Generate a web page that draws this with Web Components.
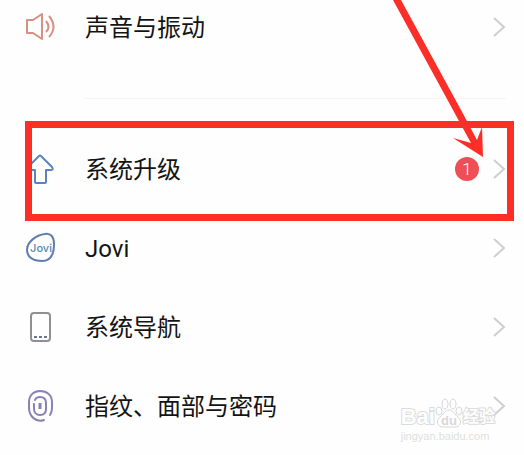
<!DOCTYPE html>
<html lang="zh-CN">
<head>
<meta charset="utf-8">
<meta name="viewport" content="width=device-width, initial-scale=1">
<title>设置</title>
<style>
   body {
      margin: 0;
      background-color: #fefefe;
      color: #141414;
      font-family: Roboto, "Noto Sans CJK SC", sans-serif;
   }
</style>
</head>
<body>
<settings-page></settings-page>

<script>
const icons = {
   sound: `
      <g stroke="#d98f82" stroke-width="2">
         <path d="M3 9H9L18 3V28L9 22H3Z"/>
         <path d="M22 10Q27 16 22 21M25 5Q34 16 25 26"/>
      </g>`,
   upgrade: `
      <path d="M15 3Q16 2 17 3L28 14Q30 17 27 17H22V29Q22 30 21 30H12Q11 30 11 29V17H5Q1 17 4 14Z" stroke="#5b83c0" stroke-width="2"/>`,
   jovi: `
      <path d="M21 2C27 1 30 5 30 12C30 23 26 29 18 29C9 29 3 25 3 18C3 10 12 3 21 2Z" stroke="#5f7eae" stroke-width="2"/>
      <text x="17" y="20" text-anchor="middle" font-family="Inter, sans-serif" font-size="11" font-weight="500" fill="#4f8ab5">Jovi</text>`,
   navigation: `
      <rect x="7" y="2" width="19" height="28" rx="3" stroke="#8f9094" stroke-width="2"/>
      <path d="M10 26H13M15 26H18M20 26H23" stroke="#6d7786" stroke-width="2"/>`,
   fingerprint: `
      <g stroke="#8a82b5" stroke-width="2" stroke-linecap="round">
         <path d="M20 30C12 33 5 26 5 18V12C5 5 10 1 16 1C23 1 28 5 28 12V18Q28 22 26 25"/>
         <path d="M11 10C12 7 14 7 16 7C20 7 22 9 22 13V19C22 23 20 25 16 25C12 25 10 22 10 19V14"/>
         <path d="M16 13V19" stroke-width="3" stroke-linecap="butt"/>
      </g>`
};

class SettingIcon extends HTMLElement {
   constructor() {
      super();
      this.shadowDOM = this.attachShadow({ mode: 'open' });
   }

   connectedCallback() {
      this.shadowDOM.innerHTML = `
         <style>
            :host {
               display: block;
               flex: none;
               width: 32px;
               height: 32px;
            }
            svg {
               display: block;
               overflow: visible;
            }
         </style>
         <svg width="32" height="32" viewBox="0 0 32 32" fill="none" stroke-linejoin="round" aria-hidden="true">
            ${icons[this.getAttribute('name')]}
         </svg>
      `;
   }
}

customElements.define('setting-icon', SettingIcon);

class CountBadge extends HTMLElement {
   constructor() {
      super();
      this.shadowDOM = this.attachShadow({ mode: 'open' });
   }

   connectedCallback() {
      this.shadowDOM.innerHTML = `
         <style>
            :host {
               display: block;
               min-width: 24px;
               border-radius: 12px;
               background-color: #ee4e55;
               color: #fff;
               font-size: 17px;
               font-weight: 300;
               line-height: 24px;
               text-align: center;
            }
         </style>
         <slot></slot>
      `;
   }
}

customElements.define('count-badge', CountBadge);

class SettingRow extends HTMLElement {
   constructor() {
      super();
      this.shadowDOM = this.attachShadow({ mode: 'open' });
   }

   connectedCallback() {
      this.shadowDOM.innerHTML = `
         <style>
            :host {
               display: block;
            }
            a {
               display: flex;
               align-items: center;
               box-sizing: border-box;
               min-height: var(--row-height, 79px);
               padding: 0 18px 0 24px;
               color: inherit;
               text-decoration: none;
            }
            .label {
               flex: 1;
               margin-left: 29px;
               padding-top: 2px;
               font-size: 24px;
               line-height: 32px;
            }
            .arrow {
               flex: none;
               margin-left: 13px;
            }
         </style>
         <a href="#${this.getAttribute('icon')}">
            <setting-icon name="${this.getAttribute('icon')}"></setting-icon>
            <span class="label"><slot></slot></span>
            <slot name="badge"></slot>
            <svg class="arrow" width="14" height="22" viewBox="0 0 14 22" fill="none" stroke="#cfcfcf" stroke-width="2" aria-hidden="true">
               <path d="M2 2L12 11L2 20"/>
            </svg>
         </a>
      `;
   }
}

customElements.define('setting-row', SettingRow);

// red frame and arrow drawn over whatever is slotted in
class MarkedArea extends HTMLElement {
   constructor() {
      super();
      this.shadowDOM = this.attachShadow({ mode: 'open' });
   }

   connectedCallback() {
      this.shadowDOM.innerHTML = `
         <style>
            :host {
               display: block;
               position: relative;
            }
            .frame {
               position: absolute;
               top: -8px;
               right: 10px;
               bottom: -13px;
               left: 25px;
               border: 7px solid #fb2f27;
               pointer-events: none;
            }
            .pointer {
               position: absolute;
               right: 40px;
               bottom: 50px;
               pointer-events: none;
            }
         </style>
         <slot></slot>
         <div class="frame"></div>
         <svg class="pointer" width="94" height="158" viewBox="0 0 94 158" fill="#fb2f27" aria-hidden="true">
            <path d="M3 0H11L71 110L87 140L92 127L93 157L63 138L81 143L63 110Z"/>
         </svg>
      `;
   }
}

customElements.define('marked-area', MarkedArea);

class SiteWatermark extends HTMLElement {
   constructor() {
      super();
      this.shadowDOM = this.attachShadow({ mode: 'open' });
   }

   connectedCallback() {
      this.shadowDOM.innerHTML = `
         <style>
            :host {
               display: block;
               color: #fefefe;
               font-family: "Liberation Sans", "Noto Sans CJK SC", sans-serif;
               font-weight: 700;
               pointer-events: none;
            }
            .brand {
               display: flex;
               align-items: flex-end;
               font-size: 22px;
               line-height: 24px;
            }
            .brand span {
               -webkit-text-stroke: 2px #dcdcdc;
               paint-order: stroke;
            }
            .brand .name {
               font-size: 16px;
            }
            .site {
               color: #dedede;
               font-size: 11px;
               font-weight: 400;
               line-height: 14px;
            }
            svg {
               display: block;
            }
         </style>
         <div class="brand">
            <span>Bai</span>
            <svg width="28" height="32" viewBox="0 0 28 32" fill="#fefefe" stroke="#d8d8d8">
               <path d="M14 13C18 13 20 18 23 20C28 24 25 30 20 30H8C3 30 0 24 5 20C8 18 10 13 14 13Z"/>
               <ellipse cx="4" cy="14" rx="3" ry="4"/>
               <ellipse cx="10" cy="7" rx="3" ry="5"/>
               <ellipse cx="18" cy="7" rx="3" ry="5"/>
               <ellipse cx="24" cy="14" rx="3" ry="4"/>
               <text x="14" y="28" text-anchor="middle" font-size="13" fill="#d8d8d8" stroke="none">du</text>
            </svg>
            <span class="name">经验</span>
         </div>
         <div class="site">jingyan.baidu.com</div>
      `;
   }
}

customElements.define('site-watermark', SiteWatermark);

class SettingsPage extends HTMLElement {
   constructor() {
      super();
      this.shadowDOM = this.attachShadow({ mode: 'open' });
   }

   connectedCallback() {
      this.shadowDOM.innerHTML = `
         <style>
            :host {
               display: block;
               position: relative;
               box-sizing: border-box;
               min-height: 100vh;
               overflow: hidden;
            }
            .first {
               --row-height: 54px;
            }
            hr {
               height: 1px;
               margin: 44px 18px 30px 85px;
               border: 0;
               background-color: #f4f4f4;
            }
            site-watermark {
               position: absolute;
               right: 29px;
               bottom: 12px;
            }
         </style>
         <main>
            <setting-row class="first" icon="sound">声音与振动</setting-row>
            <hr>
            <marked-area>
               <setting-row icon="upgrade">系统升级<count-badge slot="badge">1</count-badge></setting-row>
            </marked-area>
            <setting-row icon="jovi">Jovi</setting-row>
            <setting-row icon="navigation">系统导航</setting-row>
            <setting-row icon="fingerprint">指纹、面部与密码</setting-row>
         </main>
         <site-watermark></site-watermark>
      `;
   }
}

customElements.define('settings-page', SettingsPage);
</script>
</body>
</html>
